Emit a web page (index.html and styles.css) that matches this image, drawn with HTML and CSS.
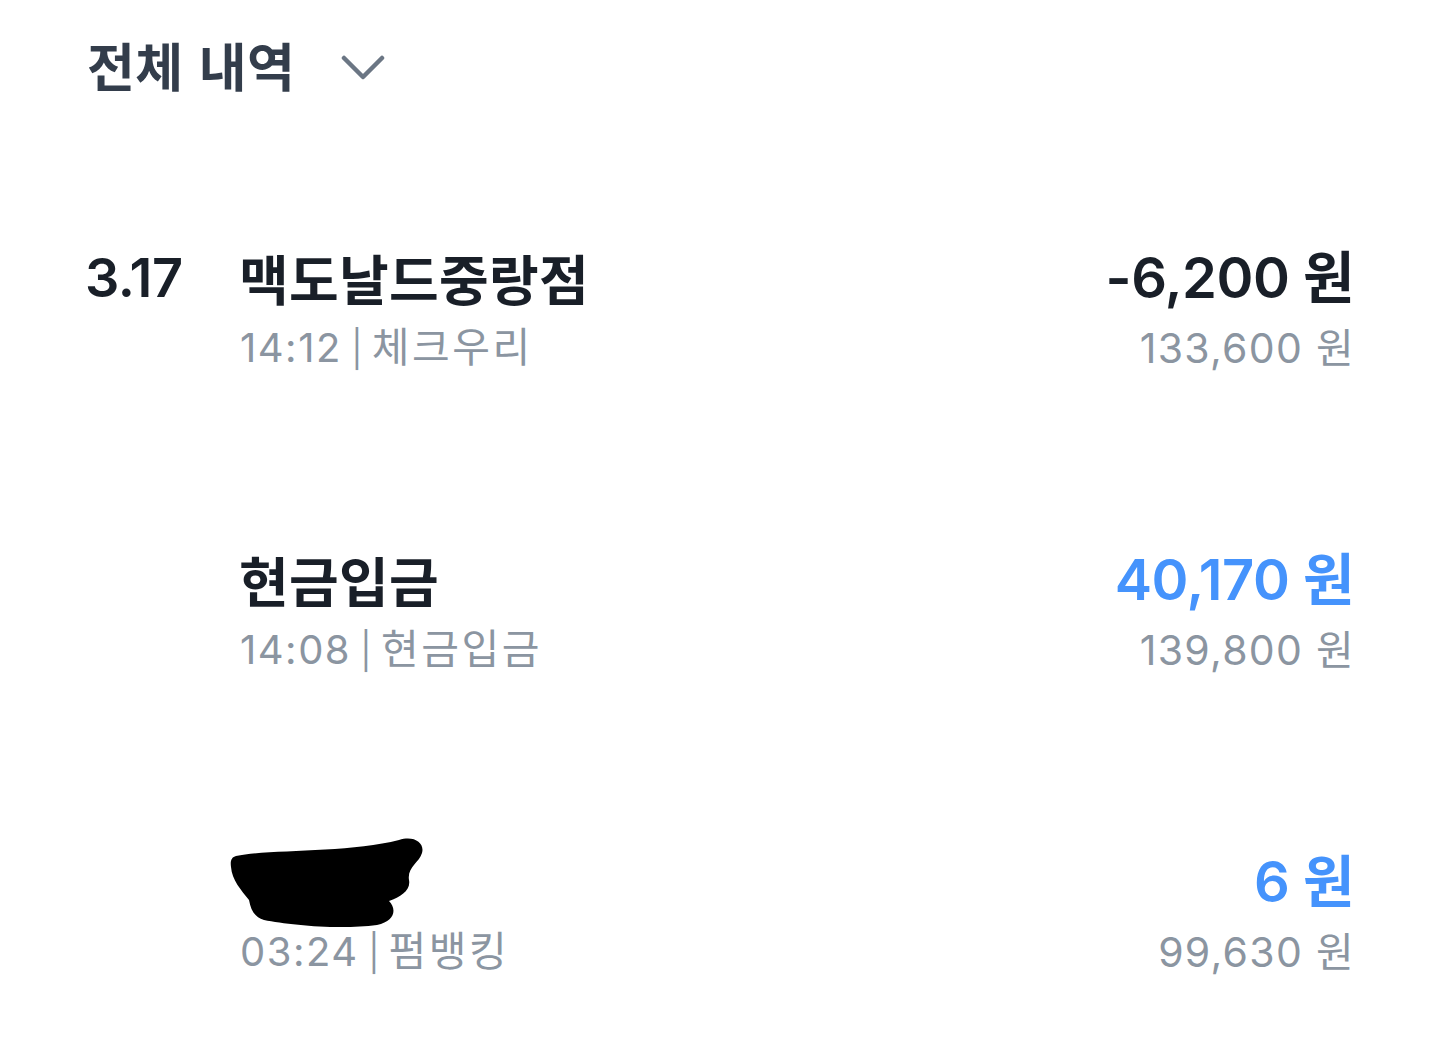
FILE: index.html
```html
<!DOCTYPE html>
<html lang="ko">
<head>
<meta charset="utf-8">
<link rel="stylesheet" href="styles.css">
</head>
<body>
<div class="page">
  <div class="header">
    <span class="header-title">전체 내역</span>
    <svg class="chevron" width="44" height="26" viewBox="0 0 44 26"><path d="M3 3 L22 22 L41 3" fill="none" stroke="#6b7684" stroke-width="4.5" stroke-linecap="round" stroke-linejoin="round"/></svg>
  </div>

  <div class="list">
    <div class="row">
      <div class="date">3.17</div>
      <div class="info">
        <div class="title">맥도날드중랑점</div>
        <div class="sub">14:12<span class="bar">|</span><span class="ko">체크우리</span></div>
      </div>
      <div class="amounts">
        <div class="amount">-6,200 원</div>
        <div class="balance">133,600 원</div>
      </div>
    </div>

    <div class="row">
      <div class="date"></div>
      <div class="info">
        <div class="title">현금입금</div>
        <div class="sub">14:08<span class="bar">|</span><span class="ko">현금입금</span></div>
      </div>
      <div class="amounts">
        <div class="amount blue">40,170 원</div>
        <div class="balance">139,800 원</div>
      </div>
    </div>

    <div class="row">
      <div class="date"></div>
      <div class="info">
        <div class="title redacted">
          <svg class="scribble" width="200" height="96" viewBox="0 0 200 96"><path d="M7 21 C 40 14, 120 18, 170 5 C 185 0, 196 8, 193 18 C 190 28, 178 32, 180 45 C 182 55, 172 62, 160 66 C 168 74, 166 86, 148 90 C 110 95, 60 90, 35 85 C 25 82, 22 75, 20 65 C 12 55, 3 45, 2 32 C 1 25, 3 22, 7 21 Z" fill="#000"/></svg>
        </div>
        <div class="sub">03:24<span class="bar">|</span><span class="ko">펌뱅킹</span></div>
      </div>
      <div class="amounts">
        <div class="amount blue">6 원</div>
        <div class="balance">99,630 원</div>
      </div>
    </div>
  </div>
</div>
</body>
</html>
```

FILE: styles.css
```css
html, body {
  margin: 0;
  padding: 0;
  background: #ffffff;
}

body {
  font-family: "Inter", "Noto Sans CJK KR", sans-serif;
  color: #191f28;
}

.page {
  padding: 30px 86px 0 87px;
}

.header {
  display: flex;
  align-items: center;
  height: 70px;
}

.header-title {
  font-family: "Noto Sans CJK KR", sans-serif;
  font-size: 52px;
  font-weight: 700;
  color: #333d4b;
  letter-spacing: 0.5px;
  line-height: 70px;
}

.chevron {
  margin-left: 46px;
  margin-top: 6px;
}

.list {
  margin-top: 143px;
  display: flex;
  flex-direction: column;
  gap: 162px;
}

.row {
  display: flex;
  align-items: flex-start;
}

.date {
  width: 154px;
  flex: none;
  font-size: 54px;
  font-weight: 600;
  line-height: 70px;
  letter-spacing: -0.5px;
  margin-left: -2px;
}

.info {
  flex: 1;
}

.title {
  font-family: "Noto Sans CJK KR", sans-serif;
  font-size: 54px;
  font-weight: 700;
  line-height: 70px;
  height: 70px;
  letter-spacing: 0.3px;
}

.title.redacted {
  position: relative;
}

.scribble {
  position: absolute;
  left: -10px;
  top: -12px;
}

.sub {
  font-size: 40px;
  line-height: 70px;
  height: 70px;
  color: #8b95a1;
  letter-spacing: 1.5px;
  margin-left: 1px;
}

.bar {
  display: inline-block;
  font-size: 36px;
  line-height: 1;
  margin: 0 9px 0 9px;
  letter-spacing: 0;
  transform: scaleX(0.9);
}

.ko {
  font-size: 41px;
  line-height: 1;
  letter-spacing: 2.5px;
}

.amounts {
  text-align: right;
}

.amount {
  font-size: 56px;
  font-weight: 600;
  line-height: 70px;
  letter-spacing: -0.5px;
}

.amount.blue {
  color: #4593fc;
}

.balance {
  font-size: 41px;
  line-height: 70px;
  color: #8b95a1;
  letter-spacing: 1.3px;
  margin-right: -1px;
}
```
